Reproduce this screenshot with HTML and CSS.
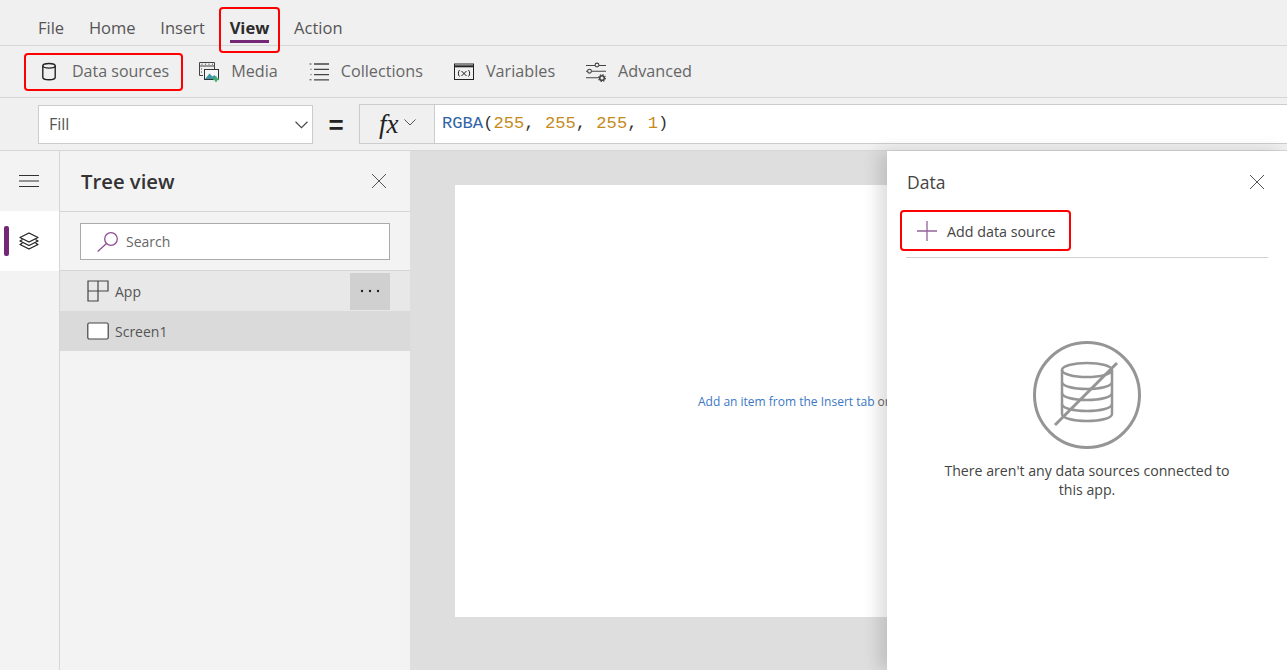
FILE: index.html
```html
<!DOCTYPE html>
<html lang="en">
<head>
    <meta charset="UTF-8">
    <meta name="viewport" content="width=device-width, initial-scale=1.0">
    <title>Power Apps Studio</title>
    <link rel="stylesheet" href="styles.css">
</head>
<body>
    <div class="tabs">
        <span class="tab">File</span>
        <span class="tab">Home</span>
        <span class="tab">Insert</span>
        <span class="tab tab-active">View<i class="callout callout-tab"></i></span>
        <span class="tab">Action</span>
    </div>

    <div class="ribbon">
        <div class="ribbon-item ribbon-first">
            <svg class="ribbon-icon" viewBox="0 0 20 20" fill="none" stroke="#222" stroke-width="1.400">
                <ellipse cx="10" cy="3.800" rx="6.200" ry="2.300"/>
                <path d="M3.800 3.800v11.400c0 1.500 2.800 2.500 6.200 2.500s6.200-1 6.200-2.500V3.800"/>
            </svg>
            <span>Data sources</span>
            <i class="callout callout-ribbon"></i>
        </div>
        <div class="ribbon-item">
            <svg class="ribbon-icon" viewBox="0 0 20 20" fill="none">
                <path d="M4 13.500H.5V.5h15V7M.5 4h15" stroke="#444"/>
                <path d="M2.500 2.200h1M6 2.200h1M9.500 2.200h1M13 2.200h1M2 7h1M2 10h1" stroke="#444"/>
                <rect x="5.500" y="7.500" width="14" height="10" fill="#f6f6f6" stroke="#333"/>
                <path d="M6 17l4.500-5.500 3 3 2-1.500 3.500 4z" fill="#3f9aa3"/>
                <path d="M17 14.500v5.500M14.200 17.300h5.600" stroke="#3fae6a" stroke-width="1.700"/>
            </svg>
            <span>Media</span>
        </div>
        <div class="ribbon-item">
            <svg class="ribbon-icon" viewBox="0 0 20 20" fill="none" stroke="#444" stroke-width="1.300">
                <path d="M5 2h15M5 7.300h15M5 12.600h15M5 17.800h15"/>
                <path d="M.5 2h2M1.500 7.300h1M1.500 12.600h1M.5 17.800h2" stroke-width="1"/>
            </svg>
            <span>Collections</span>
        </div>
        <div class="ribbon-item">
            <svg class="ribbon-icon" viewBox="0 0 20 20" fill="none" stroke="#222">
                <rect x=".5" y="2" width="19" height="15.500"/>
                <path d="M.5 4.300h19" stroke-width="2"/>
                <path d="M5.500 8c-1.500 1.700-1.500 5 0 6.500M14.500 8c1.500 1.700 1.500 5 0 6.500M7.500 9l5 5M12.500 9l-5 5" stroke-width="1"/>
            </svg>
            <span>Variables</span>
        </div>
        <div class="ribbon-item">
            <svg class="ribbon-icon" viewBox="0 0 20 20" fill="none" stroke="#444" stroke-width="1.100">
                <path d="M0 3.500h9M13 3.500h7M0 9.300h1.500M5.500 9.300H20M0 15.800h12.500"/>
                <circle cx="11" cy="3" r="1.900"/>
                <circle cx="3.500" cy="9.200" r="1.900"/>
                <circle cx="16" cy="16" r="2.300" stroke-width="1.600"/>
                <circle cx="16" cy="16" r="3.400" stroke-width="1.200" stroke-dasharray="1.300 1.370"/>
            </svg>
            <span>Advanced</span>
        </div>
    </div>

    <div class="formula-bar">
        <div class="prop-select">
            <span class="prop-name">Fill</span>
            <svg class="chevron" viewBox="0 0 12 7" fill="none" stroke="#444"><path d="M.5.500L6 6l5.500-5.500"/></svg>
        </div>
        <span class="equals">=</span>
        <div class="fx-btn">
            <span class="fx-label">fx</span>
            <svg class="chevron chevron-small" viewBox="0 0 12 7" fill="none" stroke="#555"><path d="M.5.500L6 6l5.500-5.500"/></svg>
        </div>
        <div class="formula"><span class="fn">RGBA</span>(<span class="num">255</span>, <span class="num">255</span>, <span class="num">255</span>, <span class="num">1</span>)</div>
    </div>

    <div class="main">
        <div class="rail">
            <div class="rail-btn">
                <svg class="rail-icon" viewBox="0 0 20 12" fill="none" stroke="#333"><path d="M0 .5h20M0 6h20M0 11.500h20"/></svg>
            </div>
            <div class="rail-btn rail-btn-active">
                <svg class="rail-icon layers" viewBox="0 0 20 18" fill="none" stroke="#222" stroke-width="1.300" stroke-linejoin="round">
                    <path d="M10 1l9 4.500-9 4.500-9-4.500z"/>
                    <path d="M3.500 7.500L1 9l9 4.500L19 9l-2.500-1.500"/>
                    <path d="M3.500 11L1 12.500 10 17l9-4.500-2.500-1.500"/>
                </svg>
            </div>
        </div>

        <div class="tree">
            <div class="tree-head">
                <span class="tree-title">Tree view</span>
                <svg class="close" viewBox="0 0 16 16" fill="none" stroke="#555" stroke-width="1"><path d="M1 1l14 14M15 1L1 15"/></svg>
            </div>
            <div class="tree-search">
                <div class="search-box">
                    <svg class="search-icon" viewBox="0 0 21 20" fill="none" stroke="#8f4e92" stroke-width="1.300">
                        <circle cx="14" cy="7" r="6.300"/>
                        <path d="M9.500 11.500L.7 19.500"/>
                    </svg>
                    <span>Search</span>
                </div>
            </div>
            <div class="tree-row tree-row-app">
                <svg class="tree-icon" viewBox="0 0 22 22" fill="none" stroke="#444" stroke-width="1.200">
                    <path d="M1 1h10v10H1zM11 1h10v10H11zM1 11h10v10H1z"/>
                </svg>
                <span>App</span>
                <div class="more">
                    <svg class="more-dots" viewBox="0 0 20 4" fill="#222"><circle cx="2" cy="2" r="1.200"/><circle cx="10" cy="2" r="1.200"/><circle cx="18" cy="2" r="1.200"/></svg>
                </div>
            </div>
            <div class="tree-row tree-row-screen">
                <svg class="tree-icon" viewBox="0 0 22 18" fill="#fff" stroke="#444" stroke-width="1.200">
                    <rect x=".8" y="1" width="20.400" height="16" rx="1.500"/>
                </svg>
                <span>Screen1</span>
            </div>
        </div>

        <div class="stage">
            <div class="canvas">
                <span class="canvas-hint"><span class="hint-link">Add an item from the Insert tab</span> or connect to data</span>
            </div>
        </div>

        <div class="data-panel">
            <div class="data-head">
                <span class="data-title">Data</span>
                <svg class="close" viewBox="0 0 16 16" fill="none" stroke="#555" stroke-width="1"><path d="M1 1l14 14M15 1L1 15"/></svg>
            </div>
            <div class="add-source">
                <svg class="plus" viewBox="0 0 20 20" fill="none" stroke="#93639a" stroke-width="1.300"><path d="M10 0v20M0 10h20"/></svg>
                <span>Add data source</span>
                <i class="callout callout-add"></i>
            </div>
            <div class="data-empty">
                <svg class="empty-icon" viewBox="0 0 108 108" fill="none" stroke="#959595" stroke-width="3">
                    <circle cx="54" cy="54" r="52.500"/>
                    <g stroke-width="2.500">
                        <ellipse cx="54" cy="29" rx="25" ry="7"/>
                        <path d="M29 29v44c0 4 11 7 25 7s25-3 25-7V29"/>
                        <path d="M29 41c0 4 11 7 25 7s25-3 25-7M29 52c0 4 11 7 25 7s25-3 25-7M29 63c0 4 11 7 25 7s25-3 25-7"/>
                    </g>
                    <path d="M22 84L84 22"/>
                </svg>
                <p>There aren't any data sources connected to this app.</p>
            </div>
        </div>
    </div>
</body>
</html>
```

FILE: styles.css
```css
* {
    box-sizing: border-box;
}

html,
body {
    height: 100%;
}

body {
    margin: 0;
    overflow: hidden;
    display: flex;
    flex-direction: column;
    font-family: "Open Sans", "Liberation Sans", sans-serif;
    background-color: #f0f0f0;
    color: #444;
}

/* red annotation boxes drawn over the screenshot */
.callout {
    position: absolute;
    border: 2px solid #f00;
    border-radius: 4px;
    pointer-events: none;
}

.callout-tab {
    left: -11px;
    right: -11px;
    top: -13px;
    bottom: -13px;
}

.callout-ribbon {
    inset: 0;
}

.callout-add {
    inset: 0;
}

.tabs {
    display: flex;
    align-items: flex-start;
    gap: 24.800px;
    height: 46px;
    padding: 20px 0 0 38px;
    border-bottom: 1px solid #d6d6d6;
}

.tab {
    position: relative;
    height: 20px;
    font-size: 16.500px;
    line-height: 16px;
    color: #555;
}

.tab-active {
    font-weight: 700;
    color: #2b2b2b;
}

.tab-active::after {
    content: "";
    position: absolute;
    left: 0;
    right: 0;
    top: 20px;
    height: 3px;
    background-color: #742774;
}

.ribbon {
    display: flex;
    align-items: center;
    gap: 1px;
    height: 52px;
    padding: 0 0 0 24px;
    border-bottom: 1px solid #d6d6d6;
}

.ribbon-item {
    position: relative;
    display: flex;
    align-items: center;
    gap: 12px;
    height: 38px;
    padding: 0 15px;
    font-size: 16.200px;
    color: #666;
}

.ribbon-item span {
    margin-top: -2px;
}

.ribbon-first {
    gap: 13px;
    padding: 0 14px 0 15px;
    font-size: 16px;
}

.ribbon-icon {
    width: 20px;
    height: 20px;
    flex-shrink: 0;
}

.formula-bar {
    display: flex;
    align-items: center;
    height: 53px;
    padding-left: 38px;
    border-bottom: 1px solid #d6d6d6;
}

.prop-select {
    display: flex;
    align-items: center;
    justify-content: space-between;
    width: 275px;
    height: 39px;
    margin-top: 1px;
    padding: 0 4px 0 10px;
    background-color: #fff;
    border: 1px solid #ccc;
    font-size: 16px;
    color: #555;
}

.prop-name {
    margin-top: -2px;
}

.chevron {
    width: 13px;
    height: 8px;
}

.equals {
    width: 46px;
    margin-top: 3px;
    text-align: center;
    font-family: "Liberation Sans", sans-serif;
    font-size: 26px;
    font-weight: 700;
    color: #222;
}

.fx-btn {
    display: flex;
    align-items: center;
    gap: 5px;
    width: 76px;
    height: 40px;
    padding-left: 19px;
    border: 1px solid #ccc;
    background-color: #f0f0f0;
}

.fx-label {
    font-family: "Liberation Serif", serif;
    font-style: italic;
    font-size: 27px;
    line-height: 30px;
    color: #222;
}

.chevron-small {
    width: 12px;
    height: 7px;
    margin-top: -3px;
}

.formula {
    flex: 1;
    height: 40px;
    padding-left: 7px;
    background-color: #fff;
    border-top: 1px solid #ccc;
    border-bottom: 1px solid #ccc;
    font-family: "Liberation Mono", monospace;
    font-size: 17.150px;
    line-height: 38px;
    color: #333;
}

.fn {
    color: #2f64a8;
}

.num {
    color: #c48a1a;
}

.main {
    flex: 1;
    min-height: 0;
    display: flex;
}

.rail {
    width: 60px;
    flex-shrink: 0;
    background-color: #f3f3f3;
    border-right: 1px solid #d6d6d6;
}

.rail-btn {
    position: relative;
    display: flex;
    align-items: center;
    justify-content: center;
    height: 60px;
    padding-right: 1px;
}

.rail-btn-active {
    background-color: #fff;
}

.rail-btn-active::before {
    content: "";
    position: absolute;
    left: 4px;
    top: 15px;
    width: 5px;
    height: 30px;
    border-radius: 2px;
    background-color: #742774;
}

.rail-icon {
    width: 20px;
    height: 12px;
}

.layers {
    height: 18px;
}

.tree {
    width: 350px;
    flex-shrink: 0;
    background-color: #f3f3f3;
}

.tree-head {
    display: flex;
    align-items: center;
    justify-content: space-between;
    height: 61px;
    padding: 0 23px 0 21px;
    border-bottom: 1px solid #d6d6d6;
}

.tree-title {
    font-size: 20.300px;
    font-weight: 600;
    color: #333;
}

.close {
    width: 16px;
    height: 16px;
}

.tree-search {
    height: 59px;
    padding: 11px 20px 0;
    border-bottom: 1px solid #d6d6d6;
}

.search-box {
    display: flex;
    align-items: center;
    gap: 8px;
    height: 37px;
    padding-left: 16px;
    background-color: #fff;
    border: 1px solid #aaa;
    font-size: 14px;
    color: #666;
}

.search-icon {
    width: 21px;
    height: 20px;
}

.tree-row {
    display: flex;
    align-items: center;
    gap: 6px;
    height: 40px;
    padding: 0 20px 0 27px;
    font-size: 14px;
    color: #555;
}

.tree-row-app {
    background-color: #e8e8e8;
}

.tree-row-screen {
    background-color: #dadada;
}

.tree-icon {
    width: 22px;
    height: 22px;
    flex-shrink: 0;
}

.more {
    display: flex;
    align-items: center;
    justify-content: center;
    margin-left: auto;
    width: 40px;
    height: 37px;
    background-color: #d0d0d0;
}

.more-dots {
    width: 20px;
    height: 4px;
}

.stage {
    flex: 1;
    min-width: 0;
    padding: 34px 0 0 45px;
    background-color: #dedede;
    overflow: hidden;
}

.canvas {
    display: flex;
    align-items: center;
    justify-content: center;
    width: 768px;
    height: 432px;
    background-color: #fff;
}

.canvas-hint {
    font-size: 12px;
    color: #666;
    white-space: nowrap;
}

.hint-link {
    color: #3a78c4;
}

.data-panel {
    position: relative;
    display: flex;
    flex-direction: column;
    width: 400px;
    flex-shrink: 0;
    padding: 0 19px;
    background-color: #fff;
    box-shadow: -8px 0 16px rgba(0, 0, 0, 0.14);
}

.data-head {
    display: flex;
    align-items: center;
    justify-content: space-between;
    height: 61px;
    padding: 0 3px 0 1px;
}

.data-title {
    font-size: 17.500px;
    color: #444;
}

.add-source {
    position: relative;
    display: flex;
    align-items: center;
    gap: 10px;
    width: 171px;
    height: 41px;
    margin: -2px 0 0 -6px;
    padding: 1px 0 0 17px;
    font-size: 14.300px;
    white-space: nowrap;
    color: #444;
}

.plus {
    width: 20px;
    height: 20px;
    flex-shrink: 0;
}

.data-empty {
    display: flex;
    flex-direction: column;
    align-items: center;
    margin-top: 6px;
    padding-top: 83px;
    border-top: 1px solid #d0d0d0;
}

.empty-icon {
    width: 108px;
    height: 108px;
}

.data-empty p {
    width: 300px;
    margin: 12px 0 0;
    text-align: center;
    font-size: 14.150px;
    line-height: 19px;
    color: #444;
}
```
